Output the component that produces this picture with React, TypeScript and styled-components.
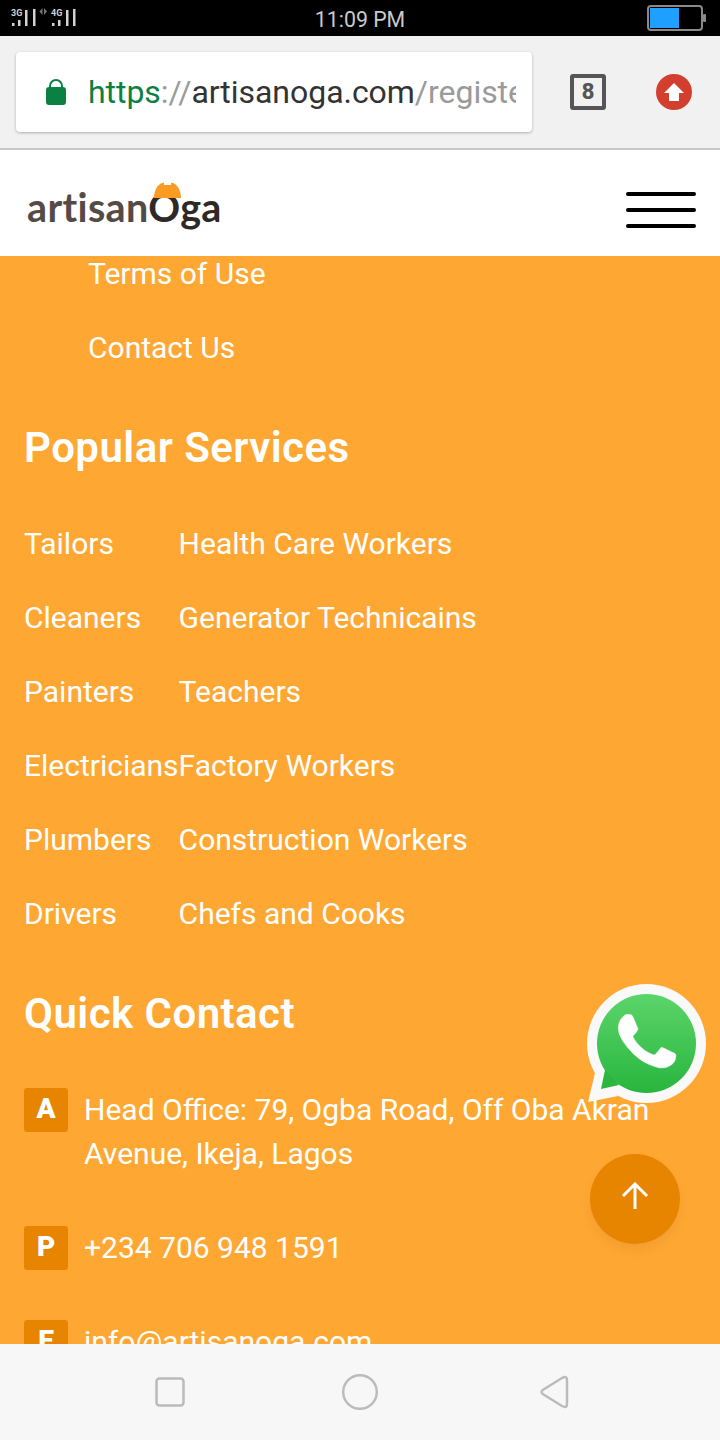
import React from 'react';
import styled, { createGlobalStyle } from 'styled-components';

const GlobalStyle = createGlobalStyle`
  html, body {
    margin: 0;
    padding: 0;
    background: #ffa733;
  }
  * {
    box-sizing: border-box;
  }
`;

const Screen = styled.div`
  display: flex;
  flex-direction: column;
  width: 720px;
  height: 1440px;
  overflow: hidden;
  font-family: Roboto, "Liberation Sans", sans-serif;
`;

const StatusBar = styled.div`
  display: grid;
  grid-template-columns: 1fr auto 1fr;
  align-items: center;
  flex: none;
  height: 36px;
  padding: 0 14px 0 10px;
  background: #000;
  color: #c9c9c9;
  font-size: 21.3px;
`;

const StatusTime = styled.span`
  position: relative;
  top: 1px;
  left: 2px;
`;

const BatteryWrap = styled.div`
  display: flex;
  justify-content: flex-end;
`;

const BrowserBar = styled.div`
  display: flex;
  align-items: center;
  flex: none;
  height: 114px;
  padding: 0 28px 0 16px;
  background: #f1f1f1;
  border-bottom: 2px solid #c8c8c8;
`;

const UrlBox = styled.div`
  display: flex;
  align-items: center;
  width: 516px;
  height: 80px;
  padding: 0 16px 0 30px;
  background: #fff;
  border-radius: 4px;
  box-shadow: 0 1px 3px rgba(0, 0, 0, 0.28);
`;

const UrlText = styled.div`
  flex: 1;
  margin-left: 22px;
  overflow: hidden;
  white-space: nowrap;
  font-size: 32px;
  letter-spacing: -0.04px;
  color: #9a9a9a;
`;

const UrlPart = styled.span<{ $tone: 'green' | 'grey' | 'dark' }>`
  color: ${({ $tone }) =>
    $tone === 'green' ? '#0b8043' : $tone === 'dark' ? '#333' : '#9a9a9a'};
`;

const TabCount = styled.div`
  display: flex;
  align-items: center;
  justify-content: center;
  width: 36px;
  height: 36px;
  margin-left: 38px;
  border: 4px solid #555;
  border-radius: 3px;
  color: #555;
  font-family: "DejaVu Sans Condensed", "DejaVu Sans", sans-serif;
  font-size: 21px;
  font-weight: 700;
`;

const UpdateBadge = styled.div`
  display: flex;
  align-items: center;
  justify-content: center;
  width: 36px;
  height: 36px;
  margin-left: auto;
  border-radius: 50%;
  background: #d33f2f;
`;

const SiteHeader = styled.header`
  display: flex;
  align-items: center;
  justify-content: space-between;
  flex: none;
  height: 106px;
  padding: 14px 24px 0 27px;
  background: #fff;
`;

const Logo = styled.div`
  position: relative;
  margin-top: -6px;
  font-family: Lato, sans-serif;
  font-size: 39.5px;
  font-weight: 700;
  line-height: 50px;
  letter-spacing: 0.35px;
  color: #544a46;
`;

const LogoDark = styled.span`
  color: #2e2826;
`;

const Helmet = styled.svg`
  position: absolute;
  left: 127px;
  top: 0;
`;

const Burger = styled.div`
  display: flex;
  flex-direction: column;
  gap: 12px;
  width: 70px;
`;

const BurgerLine = styled.span`
  display: block;
  height: 4px;
  border-radius: 2px;
  background: #000;
`;

const Footer = styled.main`
  position: relative;
  flex: 1;
  overflow: hidden;
  padding: 0 24px;
  background: #ffa733;
  color: #fff;
  font-size: 30px;
`;

const PageLinks = styled.div`
  display: flex;
  flex-direction: column;
  margin-top: -19px;
  padding-left: 64px;
`;

const LinkRow = styled.div`
  height: 74px;
  line-height: 74px;
`;

const Heading = styled.h2`
  margin: 0;
  font-family: Roboto, sans-serif;
  font-size: 42px;
  font-weight: 600;
  line-height: 50px;
  letter-spacing: 0.45px;
`;

const ServicesHeading = styled(Heading)`
  margin: 38px 0 34px;
`;

const ContactHeading = styled(Heading)`
  margin: 38px 0 49px;
`;

const ServiceGrid = styled.div`
  display: grid;
  grid-template-columns: max-content 1fr;
`;

const ContactRow = styled.div`
  display: flex;
  gap: 16px;
  margin-bottom: 50px;
`;

const ContactBadge = styled.div`
  display: flex;
  align-items: center;
  justify-content: center;
  flex: none;
  width: 44px;
  height: 44px;
  padding-bottom: 3px;
  border-radius: 3px;
  background: #e88500;
  font-size: 28px;
  font-weight: 900;
`;

const ContactText = styled.div`
  line-height: 44px;
`;

const WhatsAppButton = styled.svg`
  position: absolute;
  left: 586px;
  top: 728px;
`;

const ScrollTop = styled.div`
  position: absolute;
  left: 590px;
  top: 898px;
  display: flex;
  align-items: center;
  justify-content: center;
  width: 90px;
  height: 90px;
  padding-bottom: 6px;
  border-radius: 50%;
  background: #e88500;
  box-shadow: 0 6px 12px rgba(0, 0, 0, 0.06);
`;

const NavBar = styled.nav`
  display: flex;
  align-items: center;
  justify-content: center;
  gap: 157px;
  flex: none;
  height: 96px;
  padding-left: 4px;
  background: #f7f7f7;
`;

const BackIcon = styled.svg`
  margin-left: 4px;
`;

const services = [
  ['Tailors', 'Health Care Workers'],
  ['Cleaners', 'Generator Technicains'],
  ['Painters', 'Teachers'],
  ['Electricians', 'Factory Workers'],
  ['Plumbers', 'Construction Workers'],
  ['Drivers', 'Chefs and Cooks'],
];

const contacts = [
  { badge: 'A', text: 'Head Office: 79, Ogba Road, Off Oba Akran Avenue, Ikeja, Lagos' },
  { badge: 'P', text: '+234 706 948 1591' },
  { badge: 'E', text: 'info@artisanoga.com' },
];

const phonePath =
  'M17.472 14.382c-.297-.149-1.758-.867-2.03-.967-.273-.099-.471-.148-.67.15-.197.297-.767.966-.94 1.164-.173.199-.347.223-.644.075-.297-.15-1.255-.463-2.39-1.475-.883-.788-1.48-1.761-1.653-2.059-.173-.297-.018-.458.13-.606.134-.133.298-.347.446-.52.149-.174.198-.298.298-.497.099-.198.05-.371-.025-.52-.075-.149-.669-1.612-.916-2.207-.242-.579-.487-.5-.669-.51-.173-.008-.371-.01-.57-.01-.198 0-.52.074-.792.372-.272.297-1.04 1.016-1.04 2.479 0 1.462 1.065 2.875 1.213 3.074.149.198 2.096 3.2 5.077 4.487.709.306 1.262.489 1.694.625.712.227 1.36.195 1.871.118.571-.085 1.758-.719 2.006-1.413.248-.694.248-1.289.173-1.413-.074-.124-.272-.198-.57-.347z';

const SignalIcon = () => (
  <svg width="70" height="24" viewBox="0 0 70 24">
    <g fill="#d2d2d2">
      <text x="1" y="9.500" fontFamily="Roboto, sans-serif" fontSize="9" fontWeight="700">3G</text>
      <text x="41" y="9.500" fontFamily="Roboto, sans-serif" fontSize="9" fontWeight="700">4G</text>
      <rect x="2" y="17" width="2.500" height="3" />
      <rect x="8" y="14" width="2.500" height="6" />
      <rect x="15" y="4" width="2.500" height="16" />
      <rect x="23" y="3" width="2.500" height="17" />
      <rect x="42" y="17" width="2.500" height="3" />
      <rect x="48" y="14" width="2.500" height="6" />
      <rect x="56" y="4" width="2.500" height="16" />
      <rect x="63" y="3" width="2.500" height="17" />
      <path d="M32.500 2v7l-3-3.500zM34 2v7l3-3.500z" fill="#777" />
    </g>
  </svg>
);

const BatteryIcon = () => (
  <svg width="60" height="26" viewBox="0 0 60 26">
    <rect x="2" y="1" width="54" height="24" rx="3" fill="none" stroke="#8a8a8a" strokeWidth="2" />
    <rect x="4" y="3" width="29" height="20" fill="#1f9fff" />
    <rect x="57" y="9" width="3" height="8" rx="1" fill="#8a8a8a" />
  </svg>
);

const LockIcon = () => (
  <svg width="20" height="26" viewBox="0 0 20 26">
    <path
      d="M4 10V7a6 6 0 0 1 12 0v3"
      fill="none"
      stroke="#0b8043"
      strokeWidth="2"
    />
    <rect x="0" y="8" width="20" height="18" rx="3" fill="#0b8043" />
  </svg>
);

const App: React.FC = () => (
  <Screen>
    <GlobalStyle />
    <StatusBar>
      <SignalIcon />
      <StatusTime>11:09 PM</StatusTime>
      <BatteryWrap>
        <BatteryIcon />
      </BatteryWrap>
    </StatusBar>

    <BrowserBar>
      <UrlBox>
        <LockIcon />
        <UrlText>
          <UrlPart $tone="green">https</UrlPart>
          <UrlPart $tone="grey">://</UrlPart>
          <UrlPart $tone="dark">artisanoga.com</UrlPart>
          <UrlPart $tone="grey">/register</UrlPart>
        </UrlText>
      </UrlBox>
      <TabCount>8</TabCount>
      <UpdateBadge>
        <svg width="20" height="18" viewBox="0 0 20 18">
          <path d="M10 0l10 10h-5v8H5v-8H0z" fill="#fff" />
        </svg>
      </UpdateBadge>
    </BrowserBar>

    <SiteHeader>
      <Logo>
        artisan<LogoDark>Oga</LogoDark>
        <Helmet width="27" height="16" viewBox="0 0 27 16">
          <path
            d="M0 16C0 7 5 1 10 .5V3h7V.5C22 1 27 7 27 16z"
            fill="#fb9c22"
          />
        </Helmet>
      </Logo>
      <Burger>
        <BurgerLine />
        <BurgerLine />
        <BurgerLine />
      </Burger>
    </SiteHeader>

    <Footer>
      <PageLinks>
        <LinkRow>Terms of Use</LinkRow>
        <LinkRow>Contact Us</LinkRow>
      </PageLinks>

      <ServicesHeading>Popular Services</ServicesHeading>
      <ServiceGrid>
        {services.map(([left, right]) => (
          <React.Fragment key={left}>
            <LinkRow>{left}</LinkRow>
            <LinkRow>{right}</LinkRow>
          </React.Fragment>
        ))}
      </ServiceGrid>

      <ContactHeading>Quick Contact</ContactHeading>
      {contacts.map((c) => (
        <ContactRow key={c.badge}>
          <ContactBadge>{c.badge}</ContactBadge>
          <ContactText>{c.text}</ContactText>
        </ContactRow>
      ))}

      <WhatsAppButton width="122" height="124" viewBox="0 0 122 124">
        <defs>
          <linearGradient id="wa" x1="0" y1="0" x2="0" y2="1">
            <stop offset="0" stopColor="#5cd56a" />
            <stop offset="1" stopColor="#28b53e" />
          </linearGradient>
        </defs>
        <circle cx="60.500" cy="59.500" r="59.500" fill="#f9f9f9" />
        <path d="M9 89L2 118l30-6z" fill="#f9f9f9" />
        <circle cx="60.500" cy="59.500" r="49.500" fill="url(#wa)" />
        <path d="M19 86L15 105l18-4z" fill="#2bb640" />
        <path
          d={phonePath}
          transform="translate(3.900 0.200) scale(4.750)"
          fill="#fff"
          stroke="#fff"
          strokeWidth="0.12"
        />
      </WhatsAppButton>

      <ScrollTop>
        <svg width="28" height="28" viewBox="0 0 28 28">
          <path d="M14 27V2M2 14L14 2l12 12" fill="none" stroke="#fff" strokeWidth="3" />
        </svg>
      </ScrollTop>
    </Footer>

    <NavBar>
      <svg width="30" height="30" viewBox="0 0 30 30">
        <rect x="1.500" y="1.500" width="27" height="27" rx="3" fill="none" stroke="#bbb" strokeWidth="2.500" />
      </svg>
      <svg width="36" height="36" viewBox="0 0 36 36">
        <circle cx="18" cy="18" r="16.800" fill="none" stroke="#bbb" strokeWidth="2.400" />
      </svg>
      <BackIcon width="30" height="36" viewBox="0 0 30 36">
        <path
          d="M4.500 15.500L23 4Q28 1.500 28 6V30Q28 34.500 23 32L4.500 20.500Q.5 18 4.500 15.500z"
          fill="none"
          stroke="#bbb"
          strokeWidth="2.500"
        />
      </BackIcon>
    </NavBar>
  </Screen>
);

export default App;
